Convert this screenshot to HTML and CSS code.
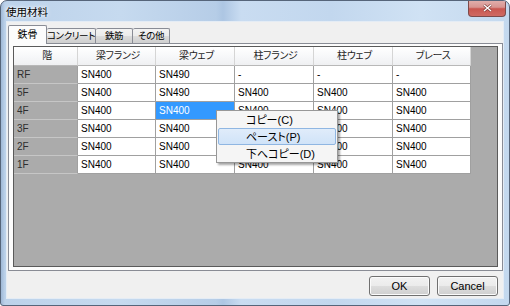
FILE: index.html
```html
<!DOCTYPE html>
<html lang="ja">
<head>
  <meta charset="UTF-8">
  <title>使用材料</title>
  <link rel="stylesheet" href="styles.css">
</head>
<body>
<div class="window">
  <div class="titlebar">
    <span class="title">使用材料</span>
    <div class="close">
      <svg width="9" height="8" viewBox="0 0 9 8"><path d="M1 1 L8 7 M8 1 L1 7" stroke="#7a3a36" stroke-width="2.6"/><path d="M1 1 L8 7 M8 1 L1 7" stroke="#fff" stroke-width="1.4"/></svg>
    </div>
  </div>
  <div class="client">
    <div class="tabs">
      <div class="tab active">鉄骨</div>
      <div class="tab w-conc">コンクリート</div>
      <div class="tab w-short">鉄筋</div>
      <div class="tab w-short">その他</div>
    </div>
    <div class="page">
      <div class="grid">
        <div class="table">
          <div class="hd">階</div>
          <div class="hd">梁フランジ</div>
          <div class="hd">梁ウェブ</div>
          <div class="hd">柱フランジ</div>
          <div class="hd">柱ウェブ</div>
          <div class="hd">ブレース</div>

          <div class="rh">RF</div>
          <div class="cell">SN400</div>
          <div class="cell">SN490</div>
          <div class="cell">-</div>
          <div class="cell">-</div>
          <div class="cell">-</div>

          <div class="rh">5F</div>
          <div class="cell">SN400</div>
          <div class="cell">SN490</div>
          <div class="cell">SN400</div>
          <div class="cell">SN400</div>
          <div class="cell">SN400</div>

          <div class="rh">4F</div>
          <div class="cell">SN400</div>
          <div class="cell selected">SN400</div>
          <div class="cell">SN400</div>
          <div class="cell">SN400</div>
          <div class="cell">SN400</div>

          <div class="rh">3F</div>
          <div class="cell">SN400</div>
          <div class="cell">SN400</div>
          <div class="cell">SN400</div>
          <div class="cell">SN400</div>
          <div class="cell">SN400</div>

          <div class="rh">2F</div>
          <div class="cell">SN400</div>
          <div class="cell">SN400</div>
          <div class="cell">SN400</div>
          <div class="cell">SN400</div>
          <div class="cell">SN400</div>

          <div class="rh">1F</div>
          <div class="cell">SN400</div>
          <div class="cell">SN400</div>
          <div class="cell">SN400</div>
          <div class="cell">SN400</div>
          <div class="cell">SN400</div>
        </div>
      </div>
    </div>
    <div class="buttons">
      <button class="btn">OK</button>
      <button class="btn">Cancel</button>
    </div>
  </div>

  <div class="menu">
    <div class="item">コピー(C)</div>
    <div class="item hover">ペースト(P)</div>
    <div class="item">下へコピー(D)</div>
  </div>
</div>
</body>
</html>
```

FILE: styles.css
```css
body { margin: 0; background: #fff; font-family: "Liberation Sans", "Noto Sans CJK JP", sans-serif; font-size: 10px; font-feature-settings: "palt"; color: #000; }

.window { position: relative; width: 510px; height: 306px; box-sizing: border-box; border: 1px solid #56657a; border-radius: 7px 7px 3px 3px; overflow: hidden; display: flex; flex-direction: column;
  background: linear-gradient(90deg, #9fb8d6 0px, #bcd2ea 4px, #c6daef 120px, #b6cde7 215px, #adc6e3 222px, #c9dcf1 240px, #c2d7ee 330px, #d0e2f4 420px, #c3d8ee 510px); }

.titlebar { height: 21px; position: relative; flex: none; }
.title { position: absolute; left: 5px; top: 4px; font-size: 10.5px; line-height: 14px; text-shadow: 0 0 5px #fff, 0 0 3px #fff; }
.close { position: absolute; right: 3px; top: -1px; width: 38px; height: 17px; box-sizing: border-box; border: 1px solid #7d4a4a; border-top: none; border-radius: 0 0 4px 4px; display: flex; align-items: center; justify-content: center;
  background: linear-gradient(#e2b1ae, #d89591 45%, #c9564f 55%, #cf6a63); }

.client { margin: 0 6px; height: 276px; background: #f0f0f0; flex: none; box-shadow: 0 0 0 1px #e4ecf5; }

.tabs { display: flex; align-items: flex-end; height: 21px; box-sizing: border-box; padding: 3px 0 0 1px; }
.tab { height: 15px; line-height: 14px; text-align: center; white-space: nowrap; overflow: hidden; font-size: 9.5px; letter-spacing: -0.4px; box-sizing: border-box; border: 1px solid #898c95; border-left: none; border-bottom: none; border-radius: 2px 2px 0 0;
  background: linear-gradient(#f3f3f3, #ebebeb 50%, #dddddd 50%, #cfcfcf); }
.tab.active { width: 39px; height: 19px; line-height: 17px; font-size: 10px; letter-spacing: 0; border-left: 1px solid #898c95; background: #fcfcfc; margin-bottom: -1px; position: relative; z-index: 1; }
.w-conc { width: 49px; }
.w-short { width: 37px; }

.page { margin-left: 1px; width: 495px; height: 228px; box-sizing: border-box; border: 1px solid #898c95; background: #fcfcfc; padding: 2px 0 0 4px; }

.grid { width: 485px; height: 221px; box-sizing: border-box; border: 1px solid #5a5a5a; background: #ababab; }
.table { display: grid; grid-template-columns: 64px 78px 79px 79px 79px 78px; grid-template-rows: 19px; grid-auto-rows: 18px; }
.table > div { box-sizing: border-box; white-space: nowrap; overflow: hidden; padding-left: 3px; line-height: 17px; }
.hd { text-align: center; padding-left: 0; color: #1e1e1e; border-right: 1px solid #d5d5d5; border-bottom: 1px solid #b8b8b8; background: linear-gradient(#ffffff, #f7f8fa 50%, #eff0f2); line-height: 18px; letter-spacing: -0.3px; }
.rh { background: #ababab; color: #2e2e2e; border-right: 1px solid #a0a0a0; border-bottom: 1px solid #c6c6c6; }
.cell { background: #fff; border-right: 1px solid #a0a0a0; border-bottom: 1px solid #a0a0a0; }
.cell.selected { background: #3399ff; color: #fff; }

.buttons { display: flex; justify-content: flex-end; gap: 7px; padding: 5px 5px 0 0; }
.btn { width: 61px; height: 20px; box-sizing: border-box; border: 1px solid #707070; border-radius: 3px; font: 11px "Liberation Sans", sans-serif; color: #000; padding: 0;
  background: linear-gradient(#f2f2f2, #ebebeb 50%, #dddddd 50%, #cfcfcf); box-shadow: inset 0 0 0 1px #fbfbfb; }

.menu { position: absolute; left: 215px; top: 109px; width: 122px; height: 53px; box-sizing: border-box; border: 1px solid #979797; background: #f5f5f5; box-shadow: 2px 2px 2px rgba(0, 0, 0, 0.35); font-size: 11px; }
.item { height: 17px; line-height: 16px; margin: 0 1px; padding-left: 27px; box-sizing: border-box; border: 1px solid transparent; border-radius: 2px; }
.item.hover { background: linear-gradient(#e0ecfa, #d0e3f8); border-color: #8fb6e2; }
```
